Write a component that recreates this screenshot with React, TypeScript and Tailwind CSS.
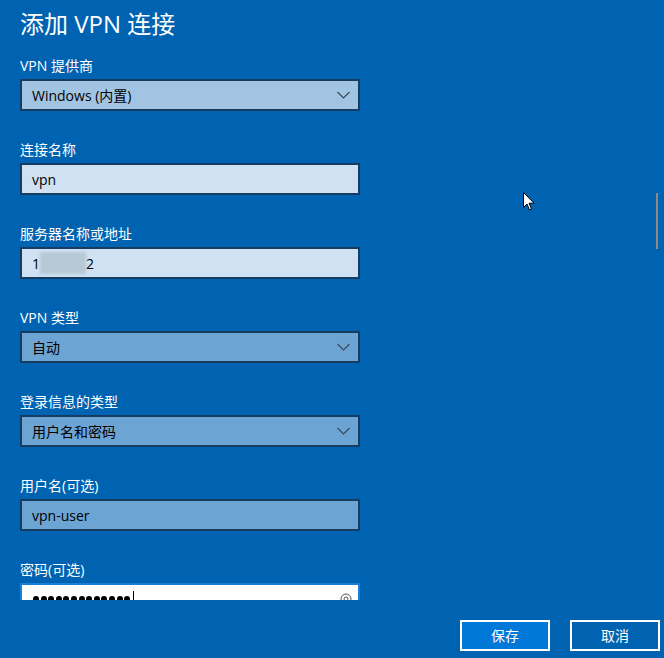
const font = { fontFamily: '"Open Sans", "Noto Sans CJK SC", sans-serif' };

function Chevron() {
  return (
    <svg width="13" height="8" viewBox="0 0 13 8" className="shrink-0">
      <path d="M0.5 1 L6.5 7 L12.5 1" fill="none" stroke="#3a4a5a" strokeWidth="1.2" />
    </svg>
  );
}

function Label({ text }: { text: string }) {
  return <p className="h-5 text-[14px] leading-5 text-white mb-[3px]">{text}</p>;
}

function Select({ label, value, bg }: { label: string; value: string; bg: string }) {
  return (
    <div className="mb-[29px]">
      <Label text={label} />
      <div className={`h-8 w-[340px] border-2 border-[#173c62] ${bg} flex items-center justify-between pl-[10px] pr-[8px]`}>
        <span className="text-[14px] text-black">{value}</span>
        <Chevron />
      </div>
    </div>
  );
}

function TextBox({ label, bg, children }: { label: string; bg: string; children: React.ReactNode }) {
  return (
    <div className="mb-[29px]">
      <Label text={label} />
      <div className={`h-8 w-[340px] border-2 border-[#173c62] ${bg} flex items-center pl-[10px]`}>
        {children}
      </div>
    </div>
  );
}

const dots = Array.from({ length: 13 }, (_, i) => i);

export default function App() {
  return (
    <div className="relative w-[664px] h-[658px] bg-[#0063b1] overflow-hidden" style={font}>
      <div className="h-[600px] overflow-hidden px-5 pt-2">
        <h1 className="text-[24px] leading-8 text-white mb-4">添加 VPN 连接</h1>
        <Select label="VPN 提供商" value="Windows (内置)" bg="bg-[#a2c4e3]" />
        <TextBox label="连接名称" bg="bg-[#cfe1f2]">
          <span className="text-[14px] text-black">vpn</span>
        </TextBox>
        <TextBox label="服务器名称或地址" bg="bg-[#cfe1f2]">
          <span className="text-[14px] text-black">1</span>
          <span className="w-[46px] h-[22px] bg-[#b7c8d6] blur-[1.5px]" />
          <span className="text-[14px] text-black">2</span>
        </TextBox>
        <Select label="VPN 类型" value="自动" bg="bg-[#6ca4d3]" />
        <Select label="登录信息的类型" value="用户名和密码" bg="bg-[#6ca4d3]" />
        <TextBox label="用户名(可选)" bg="bg-[#6ca4d3]">
          <span className="text-[14px] text-black">vpn-user</span>
        </TextBox>
        <div>
          <Label text="密码(可选)" />
          <div className="h-8 w-[340px] border-2 border-[#1a7fd6] bg-white flex items-center justify-between pl-[11px] pr-[6px]">
            <div className="flex items-center gap-[1.6px]">
              {dots.map((d) => (
                <span key={d} className="w-[6px] h-[6px] rounded-full bg-black" />
              ))}
              <span className="ml-[1px] w-px h-4 bg-black" />
            </div>
            <svg width="12" height="12" viewBox="0 0 12 12">
              <circle cx="6" cy="6" r="5" fill="none" stroke="#555" strokeWidth="1" />
              <circle cx="6" cy="6" r="2" fill="none" stroke="#555" strokeWidth="1" />
            </svg>
          </div>
        </div>
      </div>
      <div className="flex justify-end gap-5 pr-1 pt-5">
        <button className="w-[90px] h-[31px] border-2 border-white bg-[#0078d7] text-white text-[14px]">保存</button>
        <button className="w-[90px] h-[31px] border-2 border-white text-white text-[14px]">取消</button>
      </div>
      <div className="absolute left-[656px] top-[193px] w-[2px] h-[56px] bg-[#8a8a8a]" />
      <svg className="absolute left-[523px] top-[192px]" width="13" height="19" viewBox="0 0 13 19">
        <path d="M0.5 0.5 L0.5 15.5 L4 12 L6.5 18 L8.5 17 L6 11.2 L11 11.2 Z" fill="white" stroke="black" strokeWidth="1" />
      </svg>
    </div>
  );
}
